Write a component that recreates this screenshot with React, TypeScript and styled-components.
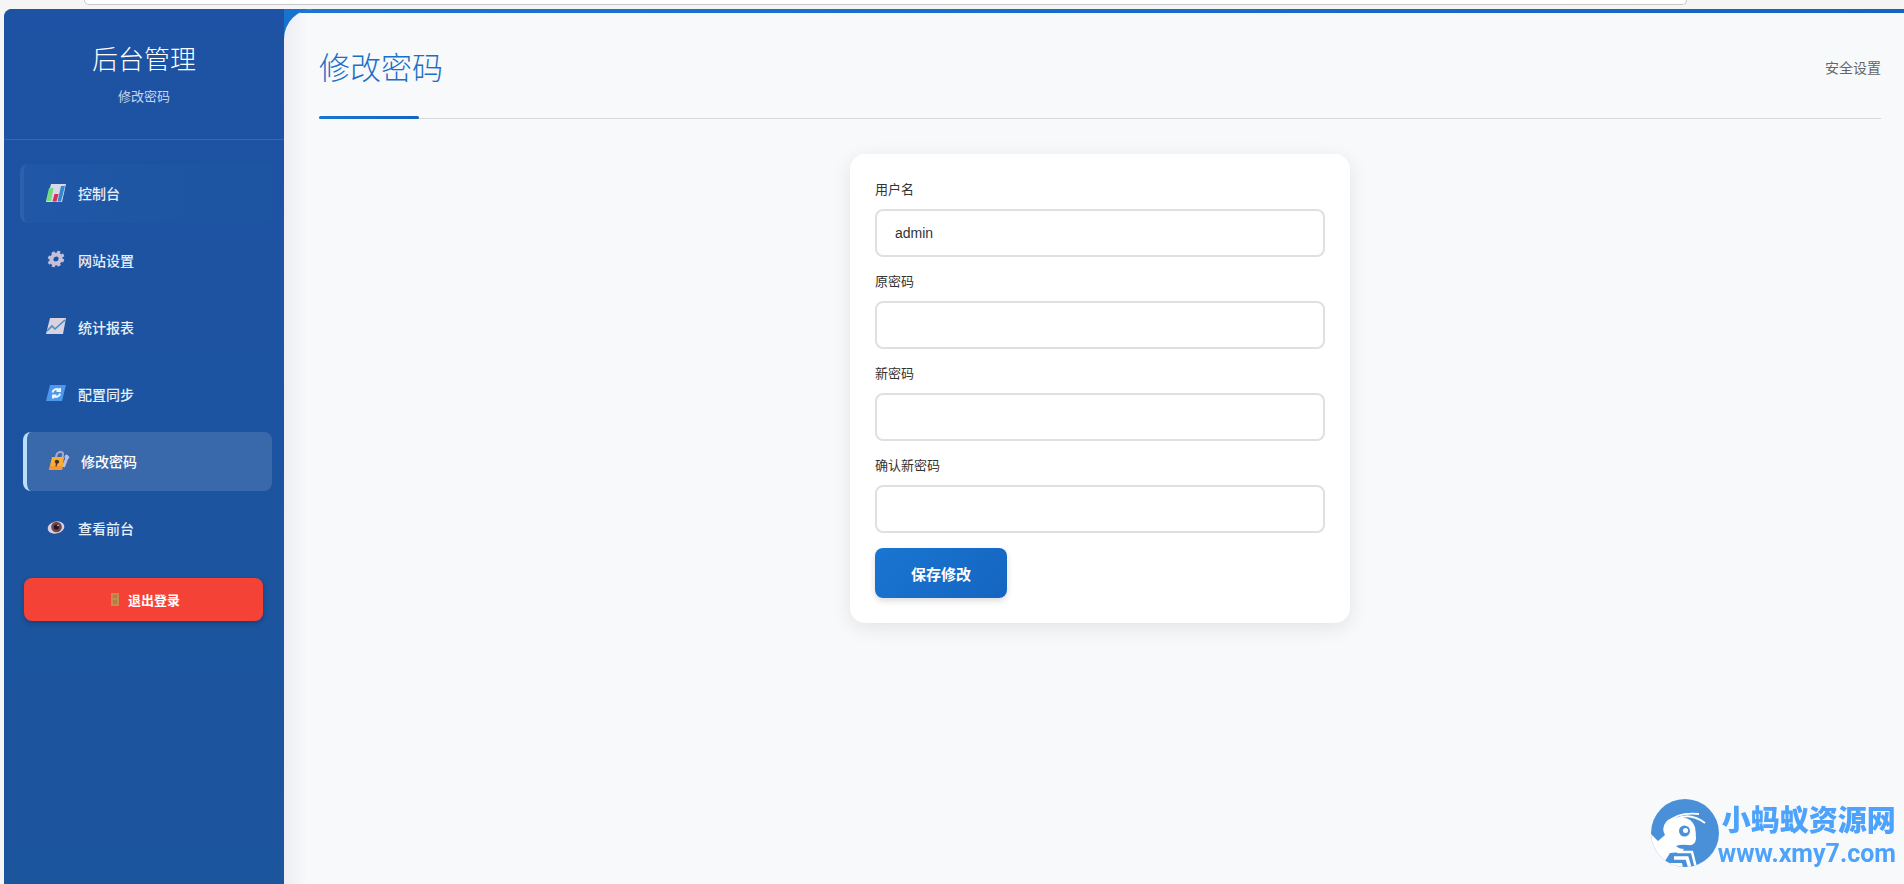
import React, { useState } from "react";
import styled, { createGlobalStyle, css } from "styled-components";

const GlobalStyle = createGlobalStyle`
  * { box-sizing: border-box; }
  body {
    margin: 0;
    background: #f5f5f6;
    color: #333;
    font-family: "Liberation Sans", "Noto Sans CJK SC", sans-serif;
    font-size: 14px;
  }
  button, input { font: inherit; }
`;

const BrowserStrip = styled.div`
  height: 9px;
  padding: 0 11.4vw 0 84px;
`;

const AddressBar = styled.div`
  height: 5px;
  background: #fff;
  border: 1px solid #c9c9cc;
  border-top: 0;
  border-radius: 0 0 12px 12px;
`;

const Shell = styled.div`
  display: flex;
  min-height: calc(100vh - 9px);
  margin-left: 4px;
  border-top-left-radius: 8px;
  background: linear-gradient(90deg, #1976d2, #1565c0);
`;

const Sidebar = styled.aside`
  flex: 0 0 280px;
  border-top-left-radius: 8px;
  background: linear-gradient(180deg, #1e52a4, #1b559c);
`;

const Brand = styled.header`
  height: 131px;
  padding: 32px 20px 0;
  text-align: center;
  border-bottom: 1px solid #3569b4;
`;

const BrandTitle = styled.h2`
  margin: 0 0 8px;
  color: #fff;
  font-size: 26px;
  line-height: 38px;
  font-weight: 300;
`;

const BrandNote = styled.p`
  margin: 0;
  color: #c6d6ee;
  font-size: 13px;
  line-height: 20px;
`;

const Nav = styled.nav`
  display: flex;
  flex-direction: column;
  gap: 8px;
  padding: 24px 12px 20px 16px;
`;

const NavLink = styled.a<{ $state?: "active" | "hover" }>`
  display: flex;
  align-items: center;
  gap: 11px;
  height: 59px;
  padding: 0 0 2px 22px;
  border-left: 4px solid transparent;
  border-radius: 8px;
  color: #e6effa;
  font-weight: 500;
  text-decoration: none;
  ${({ $state }) => $state === "hover" && css`
    border-left-color: #2b61ad;
    background: linear-gradient(90deg, #2057a6, #1e55a2);
  `}
  ${({ $state }) => $state === "active" && css`
    margin-left: 3px;
    border-left-color: #bbdefb;
    background: #3a69ab;
    color: #fff;
  `}
`;

const NavIcon = styled.svg`
  flex: none;
  width: 21px;
  height: 20px;
`;

const Logout = styled.button`
  display: flex;
  align-items: center;
  justify-content: center;
  gap: 9px;
  width: 239px;
  height: 43px;
  margin-left: 20px;
  padding: 0 0 0 4px;
  border: 0;
  border-radius: 8px;
  background: #f44336;
  box-shadow: 0 2px 5px rgba(0, 0, 0, 0.25);
  color: #fff;
  font-size: 13px;
  font-weight: 700;
`;

const Main = styled.main`
  position: relative;
  flex: 1;
  min-width: 0;
  padding: 34px 23px 40px 35px;
  border-top-left-radius: 30px;
  background: linear-gradient(90deg, #ededf3, #f8f9fb 24px);
  &::before {
    content: "";
    position: absolute;
    top: 0;
    left: 16px;
    right: 0;
    height: 4px;
    border-top-left-radius: 14px 4px;
    background: linear-gradient(90deg, #1976d2, #1565c0);
  }
`;

const PageHead = styled.header`
  position: relative;
  display: flex;
  align-items: center;
  justify-content: space-between;
  height: 76px;
  padding-bottom: 24px;
  border-bottom: 1px solid #d5d8dc;
  &::after {
    content: "";
    position: absolute;
    left: 0;
    bottom: -1px;
    width: 100px;
    height: 3px;
    border-radius: 2px;
    background: linear-gradient(90deg, #1976d2, #1565c0);
  }
`;

const PageTitle = styled.h1`
  margin: 0;
  color: #1a70c8;
  font-size: 31px;
  line-height: 48px;
  font-weight: 300;
`;

const PageNote = styled.span`
  padding-bottom: 4px;
  color: #666;
`;

const Card = styled.form`
  max-width: 500px;
  margin: 35px auto 0;
  padding: 26px 25px 25px;
  border-radius: 15px;
  background: #fff;
  box-shadow: 0 5px 20px rgba(0, 0, 0, 0.09);
`;

const Field = styled.div`
  display: flex;
  flex-direction: column;
  gap: 9px;
  margin-bottom: 15px;
`;

const Label = styled.label`
  font-size: 13px;
  line-height: 20px;
`;

const TextInput = styled.input`
  width: 100%;
  height: 48px;
  padding: 0 18px;
  border: 2px solid #dfe0e2;
  border-radius: 8px;
  outline: 0;
  background: #fff;
  color: #333;
`;

const Save = styled.button`
  display: block;
  width: 132px;
  height: 50px;
  padding: 0;
  border: 0;
  border-radius: 8px;
  background: linear-gradient(135deg, #1976d2, #1565c0);
  box-shadow: 0 3px 6px rgba(0, 0, 0, 0.14);
  color: #fff;
  font-size: 15px;
  font-weight: 700;
`;

const Watermark = styled.div`
  position: fixed;
  right: 8px;
  bottom: 14px;
  display: flex;
  color: #4da3fb;
  pointer-events: none;
`;

const WatermarkText = styled.div`
  display: flex;
  flex-direction: column;
  margin-left: -2px;
  white-space: nowrap;
`;

const WatermarkName = styled.span`
  padding-left: 4px;
  font-family: "Noto Sans CJK SC", sans-serif;
  font-size: 29px;
  line-height: 40px;
  font-weight: 900;
`;

const WatermarkSite = styled.span`
  font-family: Roboto, sans-serif;
  font-size: 25px;
  line-height: 32px;
  font-weight: 700;
`;

const Bars = () => (
  <NavIcon viewBox="0 0 21 20" aria-hidden="true">
    <path d="M5 1h15l-4 18H0z" fill="#dcd7e6" />
    <path d="M3 5h4.500L5 18H0z" fill="#72dc7d" />
    <path d="M8.500 11h4l-2 7.500h-4z" fill="#d52e5c" />
    <path d="M15 3h4l-4 15.500h-3.500z" fill="#3088d0" />
  </NavIcon>
);

const Gear = () => (
  <NavIcon viewBox="0 0 21 20" aria-hidden="true">
    <g transform="translate(10 9) skewX(-8)" fill="none" stroke="#c5c0dc">
      <circle r="4.600" strokeWidth="4" />
      <circle r="7" strokeWidth="2.600" strokeDasharray="3 2.500" />
    </g>
  </NavIcon>
);

const Trend = () => (
  <NavIcon viewBox="0 0 21 20" aria-hidden="true">
    <path d="M4 1h16l-3 16H0z" fill="#d8d3df" />
    <path d="M1 14l5-5 3 3 10-9" fill="none" stroke="#4a8cc4" strokeWidth="1.6" />
  </NavIcon>
);

const Sync = () => (
  <NavIcon viewBox="0 0 21 20" aria-hidden="true">
    <path d="M4 1h16l-4 16H0z" fill="#4b98ee" />
    <g fill="none" stroke="#f0f5ff" strokeWidth="2">
      <path d="M14 9.500a4 4 0 0 1-6.500 2.500M6.500 8.500a4 4 0 0 1 6.500-2.500" />
      <path d="M7 14.500v-3h3.500M14 4v3h-3.500" />
    </g>
  </NavIcon>
);

const Lock = () => (
  <NavIcon viewBox="0 0 21 20" aria-hidden="true">
    <path d="M6.500 8l1-4q1-3 4-3t2.500 3l-1 4" fill="none" stroke="#a9a9cf" strokeWidth="2" />
    <path d="M16 5a2 2 0 1 1 2.500 3l-3 8-2-1 3-7z" fill="#bfbee0" stroke="#bfbee0" />
    <path d="M3 6h12l-2 13H0z" fill="#fbaf2f" />
    <path d="M1 15l-1 4h13l1-4z" fill="#f3983a" />
    <path d="M8.500 9a1.700 1.700 0 0 1 0 3.400l-1 3H6.500l.3-3a1.700 1.700 0 0 1 1.700-3.400z" fill="#4a2b28" />
  </NavIcon>
);

const Eye = () => (
  <NavIcon viewBox="0 0 21 20" aria-hidden="true">
    <ellipse cx="10" cy="9.500" rx="8.500" ry="6" transform="rotate(-14 10 9.500)" fill="#d9cfe2" />
    <circle cx="10.500" cy="9" r="5.300" fill="#70454c" />
    <circle cx="10.500" cy="9" r="2.600" fill="#26161f" />
    <circle cx="12" cy="7.500" r=".8" fill="#e8d5d5" />
  </NavIcon>
);

const Door = () => (
  <svg width="8" height="13" viewBox="0 0 8 13" aria-hidden="true">
    <path d="M0 0h8v13H0z" fill="#c98a4e" />
    <path d="M2 2h4v3H2zM2 7h4v4H2z" fill="#b57c45" />
  </svg>
);

const AntLogo = () => (
  <svg width="70" height="70" viewBox="0 0 70 70" aria-hidden="true">
    <defs>
      <clipPath id="disc"><circle cx="35" cy="35" r="34" /></clipPath>
    </defs>
    <g clipPath="url(#disc)">
      <path d="M0 0h70v70H0z" fill="#4a90d9" />
      <path d="M0 35l8 8 7-6q-4-7 1-13 5-6 13-4 12-2 16 9 1 6 1 12-1 7-8 6-7-1-12 1 3 3 8 3l-2 3-12 1-5 8-7 7H0z" fill="#fff" />
      <path d="M19 24q8-10 30-8" fill="none" stroke="#fff" strokeWidth="1.800" />
      <path d="M26 21q14-7 29 4" fill="none" stroke="#fff" strokeWidth="2" />
      <path d="M27 54h15l4 16" fill="none" stroke="#fff" strokeWidth="2.500" />
      <path d="M24 60h13l3 10" fill="none" stroke="#fff" strokeWidth="3.500" />
      <path d="M20 65h12l1 5H16z" fill="#fff" />
      <circle cx="34.500" cy="33" r="5.500" fill="#4a90d9" />
      <circle cx="35.500" cy="32.500" r="2.500" fill="#fff" />
    </g>
  </svg>
);

const links: { text: string; Icon: React.FC; state?: "active" | "hover" }[] = [
  { text: "控制台", Icon: Bars, state: "hover" },
  { text: "网站设置", Icon: Gear },
  { text: "统计报表", Icon: Trend },
  { text: "配置同步", Icon: Sync },
  { text: "修改密码", Icon: Lock, state: "active" },
  { text: "查看前台", Icon: Eye },
];

const fields = [
  { id: "username", label: "用户名", type: "text" },
  { id: "current", label: "原密码", type: "password" },
  { id: "next", label: "新密码", type: "password" },
  { id: "confirm", label: "确认新密码", type: "password" },
];

export default function App() {
  const [values, setValues] = useState<Record<string, string>>({ username: "admin" });

  return (
    <>
      <GlobalStyle />
      <BrowserStrip><AddressBar /></BrowserStrip>
      <Shell>
        <Sidebar>
          <Brand>
            <BrandTitle>后台管理</BrandTitle>
            <BrandNote>修改密码</BrandNote>
          </Brand>
          <Nav>
            {links.map(({ text, Icon, state }) => (
              <NavLink key={text} href="#" $state={state} aria-current={state === "active" ? "page" : undefined}>
                <Icon />
                {text}
              </NavLink>
            ))}
          </Nav>
          <Logout type="button"><Door />退出登录</Logout>
        </Sidebar>
        <Main>
          <PageHead>
            <PageTitle>修改密码</PageTitle>
            <PageNote>安全设置</PageNote>
          </PageHead>
          <Card onSubmit={(e) => e.preventDefault()}>
            {fields.map(({ id, label, type }) => (
              <Field key={id}>
                <Label htmlFor={id}>{label}</Label>
                <TextInput
                  id={id}
                  type={type}
                  value={values[id] ?? ""}
                  onChange={(e) => setValues({ ...values, [id]: e.target.value })}
                />
              </Field>
            ))}
            <Save type="submit">保存修改</Save>
          </Card>
        </Main>
      </Shell>
      <Watermark>
        <AntLogo />
        <WatermarkText>
          <WatermarkName>小蚂蚁资源网</WatermarkName>
          <WatermarkSite>www.xmy7.com</WatermarkSite>
        </WatermarkText>
      </Watermark>
    </>
  );
}
